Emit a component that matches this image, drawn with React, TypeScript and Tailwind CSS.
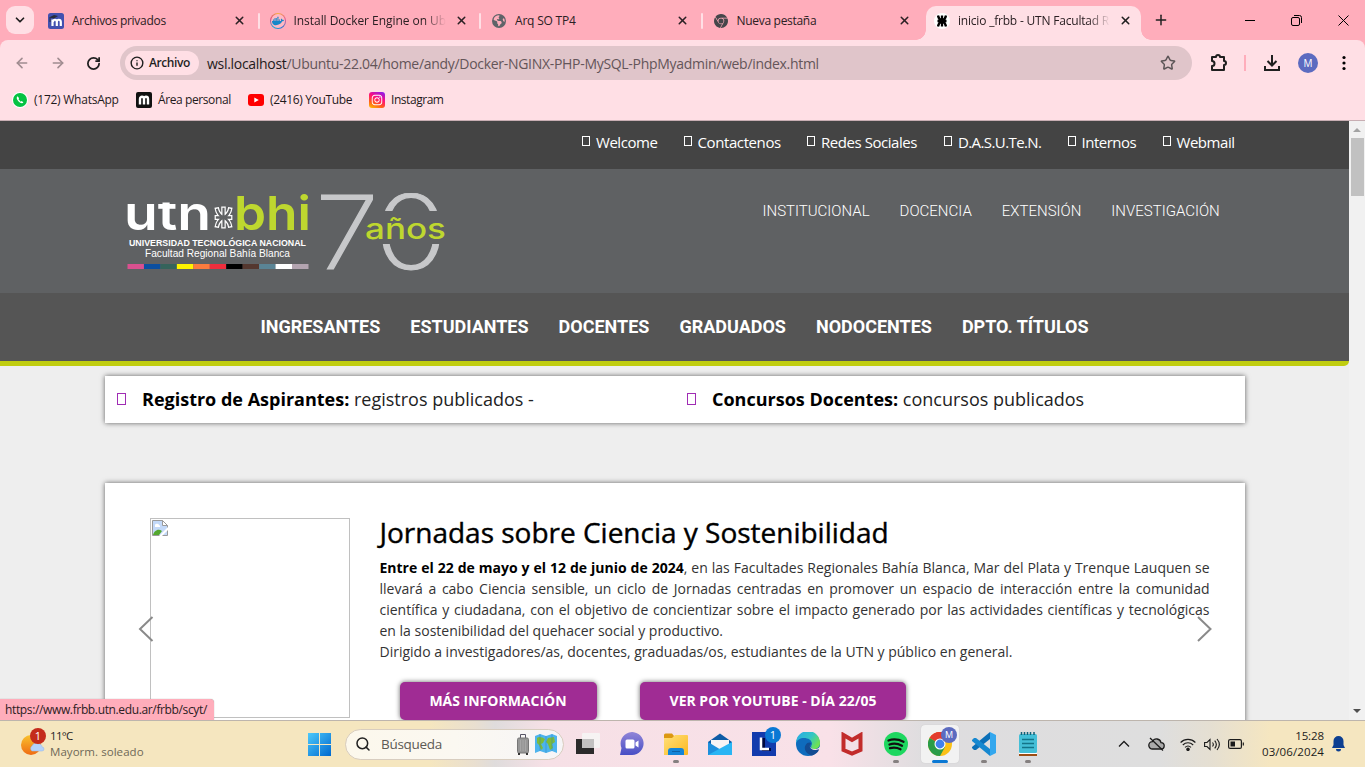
import React from "react";
import {
  ArrowLeft, ArrowRight, ChevronDown, Info, Plus,
  RotateCw, Search, Star, X,
} from "lucide-react";
import { FaDocker, FaInstagram } from "react-icons/fa";
import { FaEarthAmericas } from "react-icons/fa6";
import { SiGooglechrome } from "react-icons/si";

const UtnMark = ({ className }: { className?: string }) => (
  <svg className={className} viewBox="0 0 24 24" fill="none" stroke="#000" strokeWidth="4.600">
    <path d="M12 1v22M3 12h18M4 1c1 6 4 9 8 11 4-2 7-5 8-11M4 23c1-6 4-9 8-11 4 2 7 5 8 11" />
  </svg>
);

const MoodleTab = () => (
  <svg className="size-4" viewBox="0 0 16 16">
    <rect width="16" height="16" rx="2.500" fill="#4350af" />
    <path d="M4.500 13V6.500M5 9c0-3 3.800-3 3.800 0v4M8.800 9c0-3 4-3 4 0v4" fill="none" stroke="#fff" strokeWidth="2.200" />
    <path d="M1 4.500 6 2l4 1-4 2.500z" fill="#282c3c" />
    <path d="M2 4.500V9" stroke="#282c3c" />
  </svg>
);

const DockerTab = () => (
  <span className="relative flex size-4 items-center justify-center rounded-full bg-[conic-gradient(#f7b13c,#e85d8e,#2f74d0,#19a9d8,#dd497c,#f7b13c)]">
    <span className="absolute inset-[1px] rounded-full bg-[#ffb9c4]" />
    <FaDocker className="relative size-3 text-[#1687c9]" />
  </span>
);

type TabProps = { icon: React.ReactNode; title: string; fade?: boolean; tracking: string; divider?: boolean };
const Tab = ({ icon, title, fade, tracking, divider = true }: TabProps) => (
  <div className="relative flex h-7 w-[221.5px] shrink-0 items-center pt-px pl-2.5">
    <span className="flex size-4 shrink-0 items-center justify-center">{icon}</span>
    <span className={`ml-2 w-[152px] overflow-hidden whitespace-nowrap text-[12px] text-[#2b2023] ${tracking} ${fade ? "[mask-image:linear-gradient(to_right,#000_130px,transparent_152px)]" : ""}`}>{title}</span>
    <X className="ml-[9px] size-[13px] shrink-0 text-[#2b2023]" strokeWidth={2.8} />
    {divider && <span className="ml-auto h-4 w-[2px] rounded bg-[#ffdfe5]" />}
  </div>
);

const TabStrip = () => (
  <div className="flex h-10 shrink-0 items-center bg-[#ffadbb] pl-1.5">
    <button className="mr-1 flex size-7 shrink-0 items-center justify-center rounded-[9px] bg-[#ffdfe5]">
      <ChevronDown className="size-3.5" strokeWidth={3} />
    </button>
    <Tab icon={<MoodleTab />} title="Archivos privados" tracking="tracking-[-0.3px]" />
    <Tab icon={<DockerTab />} title="Install Docker Engine on Ubuntu" fade tracking="tracking-[-0.05px]" />
    <Tab icon={<FaEarthAmericas className="size-[14px] text-[#5f6368]" />} title="Arq SO TP4" tracking="tracking-[-0.2px]" />
    <Tab icon={<SiGooglechrome className="size-[14px] text-[#45464a]" />} title="Nueva pestaña" tracking="tracking-[-0.3px]" divider={false} />
    <div className="relative ml-[2px] flex h-[34px] w-[215px] shrink-0 items-center self-end rounded-t-[10px] bg-[#ffdfe5] pl-2">
      <span className="absolute bottom-0 -left-2.5 size-2.5 bg-[radial-gradient(circle_at_0_0,transparent_9.5px,#ffdfe5_10px)]" />
      <span className="absolute -right-2.5 bottom-0 size-2.5 bg-[radial-gradient(circle_at_100%_0,transparent_9.5px,#ffdfe5_10px)]" />
      <span className="mb-[5px] flex size-4 shrink-0 items-center justify-center rounded-full bg-white">
        <UtnMark className="size-3" />
      </span>
      <span className="mb-[5px] ml-2 w-[152px] overflow-hidden text-[12px] tracking-[-0.2px] whitespace-nowrap text-[#2b2023] [mask-image:linear-gradient(to_right,#000_130px,transparent_152px)]">inicio _frbb - UTN Facultad Regional</span>
      <X className="mb-[5px] ml-[9px] size-[13px] shrink-0" strokeWidth={2.8} />
    </div>
    <Plus className="ml-3 size-4 shrink-0" strokeWidth={2.2} />
    <div className="ml-auto flex items-center pr-4">
      <svg className="h-3 w-[10px]" viewBox="0 0 10 12"><path d="M0 6.500h10" stroke="#000" /></svg>
      <svg className="ml-9 size-[11px]" viewBox="0 0 11 11" fill="none" stroke="#000"><rect x=".5" y="2.500" width="8" height="8" rx="1.500" /><path d="M3 .5h5.500a2 2 0 0 1 2 2V8" /></svg>
      <svg className="ml-9 size-[11px]" viewBox="0 0 11 11" stroke="#000"><path d="m.5.5 10 10M10.500.5l-10 10" /></svg>
    </div>
  </div>
);

const Toolbar = () => (
  <div className="bg-[#ffadbb]">
    <div className="flex h-[46px] items-center rounded-t-lg bg-[#ffdfe5] pl-[14px]">
      <ArrowLeft className="size-4 text-[#a08c90]" strokeWidth={2.4} />
      <ArrowRight className="ml-5 size-4 text-[#a08c90]" strokeWidth={2.4} />
      <RotateCw className="ml-5 size-[15px]" strokeWidth={2.8} />
      <div className="ml-[19px] flex h-[34px] w-[1072px] items-center rounded-full bg-[#e0c5ca] pl-[5px]">
        <div className="flex h-6 w-[74px] items-center rounded-full bg-[#ffdfe5] pl-[5px]">
          <Info className="size-[14px]" strokeWidth={2.4} />
          <span className="ml-[5px] text-[12px] font-semibold tracking-[-0.4px]">Archivo</span>
        </div>
        <span className="ml-2 text-[14px] tracking-[-0.3px] whitespace-nowrap text-[#645559]">
          <span className="text-[#1f1a1b]">wsl.localhost</span>/Ubuntu-22.04/home/andy/Docker-NGINX-PHP-MySQL-PhpMyadmin/web/index.html
        </span>
        <Star className="mr-4 ml-auto size-4 text-[#5c5557]" strokeWidth={2.2} />
      </div>
      <svg className="ml-[18px] size-[18px]" viewBox="0 0 18 18" fill="none" stroke="#1f1f1f" strokeWidth="2"><path d="M2 3h4a2 2 0 0 1 4 0h4v4a2 2 0 0 1 0 4v5H2v-4a2.300 2.300 0 0 0 0-5z" strokeLinejoin="round" /></svg>
      <span className="ml-[16px] h-4 w-[2px] bg-[#ffadbb]" />
      <svg className="ml-[18px] size-4" viewBox="0 0 16 16" fill="none" stroke="#1f1f1f" strokeWidth="2"><path d="M8 0v10M3.500 6 8 10.500 12.500 6M1 11v4h14v-4" /></svg>
      <span className="ml-[18px] flex size-5 items-center justify-center rounded-full bg-[#5c6bc0] text-[10px] text-white">M</span>
      <svg className="ml-[24px] h-4 w-1" viewBox="0 0 4 16"><circle cx="2" cy="2.500" r="1.600" /><circle cx="2" cy="8" r="1.600" /><circle cx="2" cy="13.500" r="1.600" /></svg>
    </div>
    <div className="flex h-[35px] items-start border-b border-[#c8aeb3] bg-[#ffdfe5] pt-1.5 pl-3 text-[12px] text-[#1f1a1b]">
      <div className="flex h-4 w-[124px] items-center whitespace-nowrap">
        <span className="flex size-4 items-center justify-center rounded-full bg-white"><span className="flex size-[14px] items-center justify-center rounded-full bg-[#05c242]"><svg className="size-[10px]" viewBox="0 0 10 10"><path d="M2.600 1.300c-1.500 1-1 3 .8 5s4 2.700 5 1.200L6.800 6 5.700 6.700 3.500 4.300l.6-1z" fill="#fff" /></svg></span></span>
        <span className="ml-1.5 tracking-[-0.25px]">(172) WhatsApp</span>
      </div>
      <div className="flex h-4 w-28 items-center whitespace-nowrap">
        <span className="flex size-4 items-center justify-center rounded-[2px] bg-[#111]">
          <svg className="size-3" viewBox="0 0 12 12" fill="none" stroke="#fff" strokeWidth="2.400"><path d="M2 10.500V5c0-3 4-3 4 0v5.500M6 5c0-3 4-3 4 0v5.500" /></svg>
        </span>
        <span className="ml-1.5 tracking-[-0.4px]">Área personal</span>
      </div>
      <div className="flex h-4 w-[121px] items-center whitespace-nowrap">
        <svg className="h-3 w-4" viewBox="0 0 16 12"><rect width="16" height="12" rx="3" fill="#f00" /><path d="m6.300 3.400 4.500 2.600-4.500 2.600z" fill="#fff" /></svg>
        <span className="ml-1.5 tracking-[-0.35px]">(2416) YouTube</span>
      </div>
      <div className="flex h-4 items-center">
        <span className="flex size-4 items-center justify-center rounded-[3px] bg-[linear-gradient(25deg,#ffc900,#ff5c1a_30%,#ff0f7b_60%,#7a1cff)]"><FaInstagram className="size-3 text-white" /></span>
        <span className="ml-1.5 tracking-[-0.45px]">Instagram</span>
      </div>
    </div>
  </div>
);

const TopItem = ({ label, className }: { label: string; className: string }) => (
  <span className={`flex shrink-0 items-center whitespace-nowrap ${className}`}>
    <span className="mr-1.5 mb-[3px] h-[10px] w-2 shrink-0 border border-white" />{label}
  </span>
);

const Logo = () => (
  <svg width="322" height="80" viewBox="0 0 322 80" className="shrink-0" fontFamily="'Liberation Sans', sans-serif">
    <clipPath id="xheight"><rect x="-2" y="9.500" width="90" height="32" /></clipPath>
    <g fontFamily="Inter, sans-serif" fontWeight="600">
      <text x="-3" y="36.500" fontSize="48" fill="#fff" textLength="87" lengthAdjust="spacingAndGlyphs" clipPath="url(#xheight)">utn</text>
      <text x="107" y="36.500" fontSize="47" fill="#bed72f" textLength="77" lengthAdjust="spacingAndGlyphs">bhi</text>
    </g>
    <svg x="86" y="12.500" width="21" height="24" viewBox="-1 -1 26 26" fill="none" preserveAspectRatio="none">
      <g stroke="#fff" strokeWidth="5.600"><path d="M12 0v24M1 12h22M3.500 1c1 6 4 9 8.500 11 4.500-2 7.500-5 8.500-11M3.500 23c1-6 4-9 8.500-11 4.500 2 7.500 5 8.500 11" /></g>
      <path d="M12 1.500v21M2.500 12h19M3.800 2.500c1 5 4 7.500 8.200 9.500 4.200-2 7.200-4.500 8.200-9.500M3.800 21.500c1-5 4-7.500 8.200-9.500 4.200 2 7.200 4.500 8.200 9.500" stroke="#5f6163" strokeWidth="2.600" />
    </svg>
    <text x="2" y="53" fontSize="9.500" fontWeight="700" fill="#fff" textLength="177" lengthAdjust="spacingAndGlyphs">UNIVERSIDAD TECNOLÓGICA NACIONAL</text>
    <text x="18" y="64" fontSize="10" fill="#fff" textLength="145" lengthAdjust="spacingAndGlyphs">Facultad Regional Bahía Blanca</text>
    {["#d9508f", "#0c4fa0", "#35635b", "#fff200", "#fb7b3e", "#ef2e3d", "#000", "#54372f", "#5a8495", "#fff", "#b3a4b0"].map((c, i) => (
      <rect key={c} x={0.5 + i * 16.45} y="71" width="16.500" height="5" fill={c} />
    ))}
    <clipPath id="zerogap"><path d="M245 -2h76v20h-76zM245 51h76v30h-76z" /></clipPath>
    <g fontFamily="Inter, sans-serif" fontWeight="200" fill="#c7c8ca" stroke="#c7c8ca" strokeWidth="1.200">
      <text x="188" y="75.500" fontSize="102" textLength="64" lengthAdjust="spacingAndGlyphs">7</text>
      <text x="247" y="76" fontSize="103" textLength="74" lengthAdjust="spacingAndGlyphs" clipPath="url(#zerogap)">0</text>
    </g>
    <text x="238" y="46" fontFamily="Inter, sans-serif" fontSize="28" fontWeight="500" fill="#bed72f" textLength="81" lengthAdjust="spacingAndGlyphs">años</text>
  </svg>
);

const SiteHeader = () => (
  <header className="w-[1349px] overflow-hidden rounded-br-[5px] border-b-[5px] border-[#c0cd0f]">
    <div className="flex h-12 items-center bg-[#444] pb-[5px] pl-[582px] text-[15px] text-white [font-family:'Open_Sans',sans-serif]">
      <TopItem label="Welcome" className="w-[101.5px] tracking-[-0.45px]" />
      <TopItem label="Contactenos" className="w-[123.5px] tracking-[-0.4px]" />
      <TopItem label="Redes Sociales" className="w-[137px] tracking-[-0.45px]" />
      <TopItem label="D.A.S.U.Te.N." className="w-[123.5px] tracking-[-0.6px]" />
      <TopItem label="Internos" className="w-[95px] tracking-[-0.5px]" />
      <TopItem label="Webmail" className="tracking-[-0.45px]" />
    </div>
    <div className="flex h-[124px] items-start bg-[#5f6163] pl-[127px] font-[Roboto,sans-serif]">
      <div className="pt-6"><Logo /></div>
      <nav className="ml-[313.5px] flex gap-[30px] pt-[31px] text-[15px] leading-[22px] font-light whitespace-nowrap text-white">
        <span>INSTITUCIONAL</span><span>DOCENCIA</span><span>EXTENSIÓN</span><span>INVESTIGACIÓN</span>
      </nav>
    </div>
    <nav className="flex h-[68px] items-center justify-center gap-[30px] bg-[#555] pb-[2px] font-[Roboto,sans-serif] text-[18px] font-bold whitespace-nowrap text-white">
      <span>INGRESANTES</span><span>ESTUDIANTES</span><span>DOCENTES</span><span>GRADUADOS</span><span>NODOCENTES</span><span>DPTO. TÍTULOS</span>
    </nav>
  </header>
);

const Notice = ({ label, text }: { label: string; text: string }) => (
  <div className="flex w-[570px] items-center pl-3">
    <span className="mr-4 mb-px h-3 w-[9px] border border-[#a02cb4]" />
    <p className="whitespace-nowrap"><strong className="font-bold">{label}</strong> <span className="text-[#222]">{text}</span></p>
  </div>
);

const BrokenImage = () => (
  <div className="h-[200px] w-[200px] shrink-0 border border-[#c0c0c0] p-px">
    <svg className="size-4" viewBox="0 0 16 16"><path d="M.5.500h10l5 5v10H.5z" fill="#c3d9f9" stroke="#9a9a9a" /><path d="M10.500.5v5h5z" fill="#fff" stroke="#9a9a9a" /><path d="M3 5.500a2 1.500 0 0 1 4-.5 1.500 1.500 0 0 1 1 2H3z" fill="#fff" /><path d="M1 15c1-4 5-7 9-4l-3 4z" fill="#54a82f" /><path d="m7 16 9-9v3l-6 6z" fill="#fff" /></svg>
  </div>
);

const Arrow = ({ d, className }: { d: string; className: string }) => (
  <svg className={`absolute h-[26px] w-4 ${className}`} viewBox="0 0 16 26" fill="none" stroke="#8a8a8a" strokeWidth="2"><path d={d} /></svg>
);

const Page = () => (
  <div className="relative flex h-[599px] shrink-0 overflow-hidden bg-[#eee] text-black">
    <div className="w-[1349px] shrink-0 [font-family:'Open_Sans',sans-serif]">
      <SiteHeader />
      <section className="mt-[10px] ml-[105px] flex h-[47px] w-[1140px] items-center bg-white text-[18px] shadow-[0_0_5px_rgba(0,0,0,.6)]">
        <Notice label="Registro de Aspirantes:" text="registros publicados -" />
        <Notice label="Concursos Docentes:" text="concursos publicados" />
      </section>
      <section className="relative mt-[60px] ml-[105px] flex h-[280px] w-[1140px] bg-white pt-[35px] pl-[45px] shadow-[0_0_5px_rgba(0,0,0,.6)]">
        <BrokenImage />
        <article className="ml-[29.5px] w-[830px]">
          <h1 className="-mt-[3px] mb-px text-[28px] leading-[34px] font-medium tracking-[-0.01px] whitespace-nowrap [-webkit-text-stroke:0.4px_#000]">Jornadas sobre Ciencia y Sostenibilidad</h1>
          <p className="mt-[8px] text-justify text-[14px] leading-[21px] text-[#333]">
            <strong className="font-bold text-black">Entre el 22 de mayo y el 12 de junio de 2024</strong>, en las Facultades Regionales Bahía Blanca, Mar del Plata y Trenque Lauquen se llevará a cabo Ciencia sensible, un ciclo de Jornadas centradas en promover un espacio de interacción entre la comunidad científica y ciudadana, con el objetivo de concientizar sobre el impacto generado por las actividades científicas y tecnológicas en la sostenibilidad del quehacer social y productivo.<br />
            Dirigido a investigadores/as, docentes, graduadas/os, estudiantes de la UTN y público en general.
          </p>
          <div className="mt-5 ml-[20.5px] flex gap-[43px] text-[14px] font-bold text-white">
            <a className="flex h-[38px] w-[197px] items-center justify-center rounded-[5px] bg-[#a02c94] pr-px pb-[2px] shadow-[0_0_5px_rgba(0,0,0,.6)]">MÁS INFORMACIÓN</a>
            <a className="flex h-[38px] w-[266px] items-center justify-center rounded-[5px] bg-[#a02c94] pb-[2px] shadow-[0_0_5px_rgba(0,0,0,.6)]">VER POR YOUTUBE - DÍA 22/05</a>
          </div>
        </article>
        <Arrow d="M14.500 1 2 13l12.500 12" className="top-[133px] left-[33px]" />
        <Arrow d="m2 1 12.500 12L2 25" className="top-[133px] left-[1090.5px]" />
      </section>
    </div>
    <div className="flex w-4 shrink-0 flex-col items-center bg-[#f1f1f1] pt-[7px] pb-[7px]">
      <span className="border-x-4 border-b-4 border-x-transparent border-b-[#a3a3a3]" />
      <span className="mt-[6px] h-[58px] w-[13px] bg-[#c1c1c1]" />
      <span className="mt-auto border-x-4 border-t-4 border-x-transparent border-t-[#505050]" />
    </div>
    <div className="absolute bottom-0 left-0 flex h-[21px] w-[214px] items-center rounded-tr bg-[#ffadbb] pl-[5px] text-[12px] tracking-[-0.36px] whitespace-nowrap text-[#2b2023] shadow-[0_0_1px_#888]">https://www.frbb.utn.edu.ar/frbb/scyt/</div>
  </div>
);

const DockItem = ({ children, dot, active }: { children: React.ReactNode; dot?: boolean; active?: boolean }) => (
  <div className="relative flex h-full w-11 shrink-0 items-center justify-center">
    <div className={`flex h-[38px] w-[38px] items-center justify-center rounded ${active ? "bg-[#f2f2f2] shadow-[0_0_1px_#bbb]" : ""}`}>{children}</div>
    {dot && <span className="absolute bottom-[4px] h-[3px] w-1.5 rounded-full bg-[#858080]" />}
    {active && <span className="absolute bottom-[4px] h-[3px] w-4 rounded-full bg-[#0a78d4]" />}
  </div>
);

const Taskbar = () => (
  <footer className="flex h-[47px] shrink-0 items-center border-t border-[#bdb5ad] bg-[linear-gradient(90deg,#f5e6bf_0px,#f5e6bf_430px,#e9dfd0_475px,#dfdcdc_495px,#f6e0e6_545px,#f9e1e8_830px,#dedddf_925px,#dedede_1160px,#e5dfd2_1210px,#f5e6c0_1270px)]">
    <div className="flex w-[308px] items-center pl-5">
      <svg className="-mt-1 h-7 w-7" viewBox="0 0 28 28">
        <defs><linearGradient id="sun" x2="0" y2="1"><stop stopColor="#f9c22e" /><stop offset="1" stopColor="#ef6b12" /></linearGradient></defs>
        <circle cx="11" cy="17" r="10" fill="url(#sun)" />
        <path d="M12 23a3 3 0 0 1 0-5 4 4 0 0 1 6-2 3 3 0 0 1 4 3 2 2 0 0 1 0 4z" fill="#b4d2fb" stroke="#91b5ed" strokeWidth=".5" />
        <circle cx="18" cy="8" r="8" fill="#c42b1c" /><text x="18" y="12" textAnchor="middle" fontSize="11" fill="#fff">1</text>
      </svg>
      <div className="ml-0.5 text-[11.5px] leading-4 whitespace-nowrap"><p className="tracking-[-0.7px]">11°C</p><p className="tracking-[0.05px] text-[#6e6857]">Mayorm. soleado</p></div>
    </div>
    <svg className="size-[23px]" viewBox="0 0 23 23"><defs><linearGradient id="win" x2="1" y2="1"><stop stopColor="#4cc9fb" /><stop offset="1" stopColor="#0069cf" /></linearGradient></defs><path d="M0 0h11v11H0zM12 0h11v11H12zM0 12h11v11H0zM12 12h11v11H12z" fill="url(#win)" /></svg>
    <div className="mr-[2px] ml-3.5 flex h-[31px] w-[219px] shrink-0 items-center rounded-full border border-[#d8cdbf] bg-[linear-gradient(90deg,#fcf8ec,#fbf8f1_50%,#f6f5f7)] pl-[9px]">
      <Search className="size-[16px] text-[#222]" strokeWidth={2.3} />
      <span className="ml-2.5 text-[13.5px] tracking-[-0.3px] text-[#5c5a55]">Búsqueda</span>
      <svg className="ml-auto h-[22px] w-3" viewBox="0 0 12 22"><path d="M3.500 6V1.500h5V6" fill="none" stroke="#575566" /><rect x=".5" y="5" width="11" height="15" rx="1.500" fill="#969696" stroke="#777" /><path d="M3.500 7v11M6 7v11M8.500 7v11" stroke="#aaa" strokeWidth=".8" /><path d="M2 20v2M10 20v2" stroke="#333" strokeWidth="2" /></svg>
      <svg className="mr-1.5 ml-1.5 h-5 w-[22px]" viewBox="0 0 22 20"><path d="m0 2 5-2 6 2 6-2 5 2v17l-5-2-6 2-6-2-5 2z" fill="#4db4ed" /><path d="M2 4c2-2 5-1 8 1l-2 4-2 1 2 4-2 2-2-5-2-2zM13 4l6-1 1 5-3 2 1 4-3 2-2-6-2-2z" fill="#7dbb3a" /><path d="M5 0v17M11 2v17M17 0v17" stroke="#2378bd" strokeWidth=".8" opacity=".5" /></svg>
    </div>
    <DockItem><svg className="size-6" viewBox="0 0 24 24"><rect y="7" width="18" height="15" fill="#2b2b2b" /><rect x="6" y="1" width="18" height="15" rx="1" fill="#f5f4f4" opacity=".92" /><rect x="6" y="7" width="12" height="9" fill="#c2c1c1" /></svg></DockItem>
    <DockItem><svg className="size-6" viewBox="0 0 24 24"><defs><linearGradient id="chat" x2="0" y2="1"><stop stopColor="#9185d8" /><stop offset="1" stopColor="#484fc5" /></linearGradient></defs><path d="M0 23 1.500 16A11.500 11.500 0 1 1 12 23z" fill="url(#chat)" /><rect x="5.500" y="7.500" width="9" height="9" rx="1.500" fill="#fff" /><path d="m15.500 10.500 3-2v7l-3-2z" fill="#fff" /></svg></DockItem>
    <DockItem dot><svg className="size-6" viewBox="0 0 24 24"><defs><linearGradient id="fold" x2="1" y2="1"><stop stopColor="#ffe07a" /><stop offset="1" stopColor="#fcb81f" /></linearGradient></defs><path d="M0 3a1.500 1.500 0 0 1 1.500-1.500H8L10 4v3H0z" fill="#dc9812" /><path d="M0 6h8l3-3h12a1 1 0 0 1 1 1v18a1 1 0 0 1-1 1H0z" fill="url(#fold)" /><path d="M4 23v-4a3 3 0 0 1 3-3h10a3 3 0 0 1 3 3v4z" fill="#1385d8" /><path d="M8 19.500h8" stroke="#0b62a8" /></svg></DockItem>
    <DockItem><svg className="size-6" viewBox="0 0 24 24"><path d="M0 10 12 1.500 24 10v13H0z" fill="#0e5ca6" /><path d="M3 8h18v5l-9 6-9-6z" fill="#f6f4f5" /><path d="m0 10 14 8.500L0 23z" fill="#1d8fdc" /><path d="M24 10v13H0z" fill="#29b5f4" /></svg></DockItem>
    <DockItem><div className="relative"><svg className="size-6" viewBox="0 0 24 24"><rect width="24" height="24" fill="#123bad" /><path d="M10 6h3v10h6v3h-9z" fill="#000a40" /><path d="M9 5.500v11.500h8" stroke="#fff" strokeWidth="2.500" fill="none" /></svg><span className="absolute -top-[5px] -right-[5px] flex size-4 items-center justify-center rounded-full bg-[#0a78d4] text-[11px] text-white">1</span></div></DockItem>
    <DockItem><svg className="size-6" viewBox="0 0 24 24"><defs><linearGradient id="e1" x2="1" y2=".6"><stop stopColor="#28a8ea" /><stop offset=".6" stopColor="#33c6c4" /><stop offset="1" stopColor="#6ee152" /></linearGradient></defs><circle cx="12" cy="12" r="12" fill="#0f6cbd" /><path d="M0 11A12 12 0 0 1 24 11c0 4-3 6-6 6-4 0-3-3-2-5 0-4-4-6-8-6-4 0-7 2-8 5z" fill="url(#e1)" /><path d="M15 11.500c-2 3-1 6 4 6 2 0 3-.5 4-1 1 1-3 7-8 7-5-2-8-7-5-11 1-2 4-3 5-1z" fill="#134c92" /><path d="M14.500 11.500c-2 3 0 5.500 4 5.500 3 0 5-1.500 6-3v2c-1 1.500-3 2-5 2-5 0-7-3-5-6.500z" fill="#f9e1e8" /></svg></DockItem>
    <DockItem><svg className="h-6 w-[22px]" viewBox="0 0 22 24"><path d="m2.500 3 8.500 5 8.500-5v15L11 21.500 2.500 18z" fill="none" stroke="#c22c2b" strokeWidth="4" /></svg></DockItem>
    <DockItem dot><svg className="size-6" viewBox="0 0 24 24"><circle cx="12" cy="12" r="12" fill="#1ed760" /><path d="M4.500 8.500c5-1.800 10-1.200 15 1.300M5.500 12.500c4-1.500 8.500-1 12.500 1.200M6 16.200c4-1 7-.7 10.500 1.100" fill="none" stroke="#111" strokeWidth="2.300" strokeLinecap="round" /></svg></DockItem>
    <DockItem active><div className="relative"><svg className="size-6" viewBox="0 0 24 24"><circle cx="12" cy="12" r="12" fill="#fbc116" /><path d="M12 12 1.600 6A12 12 0 0 1 22.400 6z" fill="#e33b2e" /><path d="M12 12 1.600 6A12 12 0 0 0 12 24l5-9z" fill="#2a9c48" /><path d="M1.600 6A12 12 0 0 1 22.400 6H12z" fill="#e33b2e" /><circle cx="12" cy="12" r="5.500" fill="#fff" /><circle cx="12" cy="12" r="4.400" fill="#4081ed" /></svg><span className="absolute -top-[5px] -right-[5px] flex size-4 items-center justify-center rounded-full bg-[#5c6bc0] text-[9px] text-white">M</span></div></DockItem>
    <DockItem dot><svg className="size-6" viewBox="0 0 24 24"><path d="M18 0 24 3v18l-6 3z" fill="#33a7ee" /><path d="M18 0v7L4 18H2l-2-2v-1z" fill="#0b70b8" /><path d="M18 24v-7L4 6H2L0 8v1z" fill="#1688d0" /></svg></DockItem>
    <DockItem dot><svg className="size-6" viewBox="0 0 24 24"><rect x="3" y="2" width="18" height="19" rx="1.500" fill="#44bfd7" /><path d="M5.500 0v3M8.500 0v3M11.500 0v3M14.500 0v3M18 0v3" stroke="#126278" strokeWidth="1.500" /><path d="M6 7.500h12M6 11.500h12M6 15.500h12" stroke="#137489" strokeWidth="1.400" /><path d="M3 21h18v3H3z" fill="#fff" /><path d="M3 23h18" stroke="#9c4e15" strokeWidth="2" /></svg></DockItem>
    <div className="ml-auto flex items-center pr-5 text-[#1b1b1b]">
      <svg className="h-3 w-3" viewBox="0 0 12 12" fill="none" stroke="#1b1b1b" strokeWidth="1.300"><path d="m1 8.500 5-5 5 5" /></svg>
      <svg className="ml-[18px] h-[14px] w-[17px]" viewBox="0 0 17 14" fill="none" stroke="#1b1b1b" strokeWidth="1.300"><path d="M4.500 12a3.700 3.700 0 0 1 0-7.400A4.500 4.500 0 0 1 13 5.600a3.200 3.200 0 0 1 0 6.400z" fill="#aaa" /><path d="m2 1 13 12.500" /></svg>
      <svg className="ml-[15px] h-[13px] w-4" viewBox="0 0 16 13" fill="none" stroke="#1b1b1b" strokeWidth="1.100"><path d="M.6 4.500c4.200-4.200 10.600-4.200 14.800 0M2.800 7c3-3 7.400-3 10.400 0M5 9.400c1.800-1.700 4.200-1.700 6 0" /><circle cx="8" cy="11.300" r="1.200" fill="#1b1b1b" /></svg>
      <svg className="ml-2 h-[13px] w-4" viewBox="0 0 16 13" fill="none" stroke="#1b1b1b" strokeWidth="1.100"><path d="M.6 4.500h2.400l3-3v10L3 8.500H.6zM8.500 4.500c1 1.200 1 2.800 0 4M10.700 2.700c2 2.300 2 5.300 0 7.600M13 1c3 3.500 3 7.500 0 11" /></svg>
      <svg className="ml-2 h-[10px] w-4" viewBox="0 0 16 10" fill="none" stroke="#1b1b1b" strokeWidth="1.200"><rect x=".6" y=".6" width="12.800" height="8.800" rx="1.500" /><path d="M15.300 3.500v3" /><path d="M2.500 2.500H7v5H2.500z" fill="#1b1b1b" stroke="none" /></svg>
      <div className="ml-[17px] w-[63px] text-right text-[11.5px] leading-4 tracking-[0.1px] whitespace-nowrap"><p className="tracking-[-0.1px]">15:28</p><p>03/06/2024</p></div>
      <svg className="ml-2 h-4 w-[13px]" viewBox="0 0 13 16" fill="#0d3f91"><path d="M6.500 0a5 5 0 0 1 5 5v4l1.500 3H0l1.500-3V5a5 5 0 0 1 5-5M4 13h5a2.500 2.500 0 0 1-5 0" /></svg>
    </div>
  </footer>
);

export default function App() {
  return (
    <div className="flex h-[767px] w-[1365px] flex-col overflow-hidden text-[#1f1f1f] [font-family:'Open_Sans',sans-serif]">
      <TabStrip />
      <Toolbar />
      <Page />
      <Taskbar />
    </div>
  );
}
